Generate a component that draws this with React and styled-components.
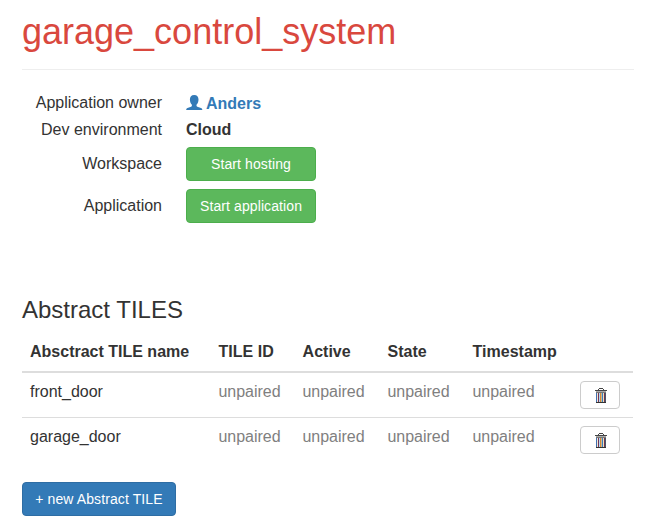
import React from "react";
import styled, { createGlobalStyle } from "styled-components";

const GlobalStyle = createGlobalStyle`
  * { box-sizing: border-box; }
  body {
    margin: 0;
    background: #fff;
    color: #333;
    font-family: "Liberation Sans", Arial, sans-serif;
    font-size: 16px;
    line-height: 23px;
  }
`;

const Page = styled.main`
  width: 655px;
  height: 528px;
  padding: 11px 21px 0 22px;
  overflow: hidden;
`;

const Title = styled.h1`
  margin: 0;
  height: 59px;
  border-bottom: 1px solid #eee;
  color: #d9483e;
  font-size: 36px;
  font-weight: 400;
  line-height: 42px;
`;

const Details = styled.dl`
  display: grid;
  grid-template-columns: 140px 130px;
  grid-template-rows: 25px 28px 42px 42px;
  column-gap: 24px;
  align-items: center;
  margin: 20px 0 0;
`;

const Term = styled.dt`
  text-align: right;
  padding-top: ${(p) => (p.$low ? "1px" : "0")};
  padding-bottom: ${(p) => (p.$low ? "0" : "1px")};
`;

const Value = styled.dd`
  display: flex;
  align-items: center;
  margin: 0;
  padding-top: ${(p) => (p.$low ? "1px" : "0")};
  font-weight: 700;
`;

const OwnerLink = styled.a`
  display: flex;
  align-items: center;
  gap: 3px;
  padding-top: 1px;
  color: #337ab7;
  text-decoration: none;
`;

const Button = styled.button`
  display: block;
  width: ${(p) => p.$width};
  height: 34px;
  padding: 0;
  border: 1px solid ${(p) => (p.$primary ? "#2e6da4" : "#4cae4c")};
  border-radius: 4px;
  background: ${(p) => (p.$primary ? "#337ab7" : "#5cb85c")};
  color: #fff;
  font: 14px/20px "Liberation Sans", Arial, sans-serif;
  letter-spacing: 0.1px;
`;

const SectionTitle = styled.h3`
  margin: 70px 0 0;
  font-size: 24px;
  font-weight: 400;
  line-height: 26px;
`;

const Table = styled.table`
  width: 611px;
  margin: 9px 0 19px;
  table-layout: fixed;
  border-collapse: separate;
  border-spacing: 0;
`;

const Column = styled.col`
  width: ${(p) => p.$width}px;
`;

const HeadCell = styled.th`
  height: 41px;
  padding: 8px;
  border-bottom: 2px solid #ddd;
  line-height: 23px;
  text-align: left;
  vertical-align: top;
  white-space: nowrap;

  &:not(:first-child) {
    padding-left: 8.6px;
  }
`;

const Cell = styled.td`
  height: 45px;
  padding: ${(p) => (p.$action ? "8px" : "7px 8px 8px")};
  padding-left: ${(p) => (p.$muted ? "8.4px" : "8px")};
  border-bottom: ${(p) => (p.$last ? "0" : "1px solid #ddd")};
  color: ${(p) => (p.$muted ? "#808080" : "#333")};
  vertical-align: top;
`;

const DeleteButton = styled.button`
  display: flex;
  align-items: center;
  justify-content: center;
  width: 40px;
  height: 28px;
  padding: 0;
  border: 1px solid #ccc;
  border-radius: 4px;
  background: #fff;
`;

function UserIcon() {
  return (
    <svg width="17" height="16" viewBox="0 0 17 16" fill="#337ab7" aria-hidden="true">
      <path d="M8.2 0C5.300 0 3.900 1.800 3.900 4.600c0 2.100.7 3.900 2 5.200v1c0 .5-.3.7-.8.9L1.500 13C.7 13.300.2 13.800.2 15H16.300c0-1.200-.5-1.700-1.300-2l-3.700-1.300c-.5-.2-.8-.4-.8-.9v-1c1.300-1.300 2-3.100 2-5.200C12.500 1.800 11.100 0 8.200 0Z" />
    </svg>
  );
}

const stripes = ["#3f6fb0", "#f2e4d0", "#733557", "#b3d9f5", "#d18b35", "#c5b8a0", "#397fc0", "#f5dfb6", "#713654", "#4a5967"];

function TrashIcon() {
  return (
    <svg width="14" height="16" viewBox="0 0 14 16" shapeRendering="crispEdges" aria-hidden="true">
      <path d="M6 1h4v1H6zM5 2h1v1H5zM10 2h1v1h-1z" fill="#444" />
      <path d="M2 3h12v1H2z" fill="#444" />
      <path d="M3 4h10v1H3z" fill="#aaa" />
      <path d="M3 5h10v1H3z" fill="#777" />
      {stripes.map((color, i) => (
        <rect key={i} x={i + 3} y="6" width="1" height="9" fill={color} />
      ))}
      <path d="M3 15h10v1H3z" fill="#333" />
    </svg>
  );
}

const headings = ["Absctract TILE name", "TILE ID", "Active", "State", "Timestamp", ""];
const tiles = ["front_door", "garage_door"];
const widths = [188, 84, 85, 85, 108, 61];

export default function App() {
  return (
    <>
      <GlobalStyle />
      <Page>
        <Title>garage_control_system</Title>
        <Details>
          <Term>Application owner</Term>
          <Value>
            <OwnerLink><UserIcon />Anders</OwnerLink>
          </Value>
          <Term $low>Dev environment</Term>
          <Value $low>Cloud</Value>
          <Term>Workspace</Term>
          <Value><Button $width="130px">Start hosting</Button></Value>
          <Term>Application</Term>
          <Value><Button $width="130px">Start application</Button></Value>
        </Details>
        <SectionTitle>Abstract TILES</SectionTitle>
        <Table>
          <colgroup>
            {widths.map((w, i) => <Column key={i} $width={w} />)}
          </colgroup>
          <thead>
            <tr>{headings.map((h, i) => <HeadCell key={i}>{h}</HeadCell>)}</tr>
          </thead>
          <tbody>
            {tiles.map((name, row) => {
              const last = row === tiles.length - 1;
              return (
                <tr key={name}>
                  <Cell $last={last}>{name}</Cell>
                  {[0, 1, 2, 3].map((n) => <Cell key={n} $muted $last={last}>unpaired</Cell>)}
                  <Cell $action $last={last}>
                    <DeleteButton aria-label={`Delete ${name}`}><TrashIcon /></DeleteButton>
                  </Cell>
                </tr>
              );
            })}
          </tbody>
        </Table>
        <Button $primary $width="154px">+ new Abstract TILE</Button>
      </Page>
    </>
  );
}
